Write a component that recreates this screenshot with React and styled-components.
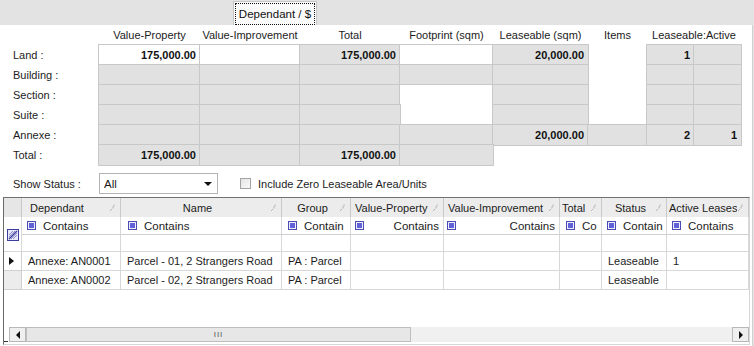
import React from 'react';
import styled, { createGlobalStyle } from 'styled-components';

const GlobalStyle = createGlobalStyle`
  html, body {
    margin: 0;
    padding: 0;
    background: #ffffff;
  }
  body {
    font-family: "Liberation Sans", Arial, sans-serif;
    font-size: 11px;
    color: #1c1c1c;
  }
`;

const Page = styled.div`
  width: 754px;
  height: 346px;
  overflow: hidden;
  background: #e3e3e3;
  display: flex;
  flex-direction: column;
`;

const TabBar = styled.div`
  height: 25px;
  display: flex;
  align-items: flex-end;
  padding-left: 233px;
  box-sizing: border-box;
`;

const Tab = styled.div`
  height: 24px;
  width: 84px;
  box-sizing: border-box;
  border: 1px solid #c6c6c6;
  border-bottom: none;
  background: #fafafa;
  padding: 1px 1px 0 1px;
  display: flex;
`;

const FocusBox = styled.div`
  flex: 1;
  border: 1px dotted #111;
  display: flex;
  align-items: center;
  justify-content: center;
  font-size: 11.5px;
  color: #111;
`;

const Body = styled.div`
  flex: 1;
  width: 753px;
  box-sizing: border-box;
  background: #ffffff;
  border-right: 1px solid #d2d2d2;
  display: flex;
  flex-direction: column;
`;

const Summary = styled.div`
  display: grid;
  grid-template-columns: 99px 101px 100px 100px 93px 95px 59px 47px 47px;
  grid-auto-rows: 20px;
`;

const HeadLabel = styled.div`
  display: flex;
  align-items: center;
  justify-content: center;
  white-space: nowrap;
  color: #1c1c1c;
`;

const RowLabel = styled.div`
  display: flex;
  align-items: center;
  padding-left: 13px;
  color: #1c1c1c;
`;

const SumCell = styled.div`
  display: flex;
  align-items: center;
  justify-content: flex-end;
  padding-right: 4px;
  font-weight: bold;
  color: #111;
  grid-row: ${p => (p.$span ? `span ${p.$span}` : 'auto')};
  background: ${p => (p.$kind === 'g' ? '#e1e1e1' : p.$kind === 'w' ? '#ffffff' : 'transparent')};
  box-shadow: ${p => (p.$kind === 'n' ? 'none' : '0 0 0 1px #c8c8c8')};
`;

const StatusRow = styled.div`
  display: flex;
  align-items: center;
  height: 21px;
  margin-top: 8px;
`;

const StatusLabel = styled.div`
  width: 86px;
  padding-left: 13px;
  color: #1c1c1c;
`;

const Combo = styled.div`
  width: 119px;
  height: 21px;
  box-sizing: border-box;
  border: 1px solid #b4b4b4;
  display: flex;
  align-items: center;
  justify-content: space-between;
  padding: 0 4px 0 4px;
  font-size: 11.5px;
`;

const Arrow = styled.span`
  width: 0;
  height: 0;
  border-left: 4px solid transparent;
  border-right: 4px solid transparent;
  border-top: 4px solid #111;
  margin-right: 1px;
`;

const CheckWrap = styled.label`
  display: flex;
  align-items: center;
  margin-left: 22px;
  gap: 7px;
  color: #1c1c1c;
`;

const CheckBox = styled.span`
  width: 11px;
  height: 11px;
  box-sizing: border-box;
  border: 1px solid #a3a3a3;
  background: linear-gradient(135deg, #e4e4e4, #fafafa);
`;

const GridBox = styled.div`
  margin: 3px 0 0 3px;
  width: 747px;
  height: 148px;
  box-sizing: border-box;
  border-top: 1px solid #707070;
  border-left: 1px solid #6a6a6a;
  border-right: 1px solid #d6d6d6;
  border-bottom: 1px solid #d6d6d6;
  display: flex;
  flex-direction: column;
  overflow: hidden;
`;

const Table = styled.div`
  display: grid;
  grid-template-columns: 18px 99px 161px 69px 93px 116px 42px 65px 82px;
  grid-template-rows: 19px 18px 17px 19px 19px;
`;

const HeadCell = styled.div`
  background: #ececec;
  border-right: 1px solid #c9c9c9;
  display: flex;
  align-items: center;
  padding: 0 4px 0 ${p => p.$pad}px;
  overflow: hidden;
  white-space: nowrap;
  color: #1c1c1c;
`;

const HeadTitle = styled.span`
  flex: 1;
  text-align: ${p => p.$align};
  overflow: hidden;
`;

const Corner = styled.div`
  background: #e6e6e6;
  border-right: 1px solid #c9c9c9;
`;

const FilterHead = styled.div`
  grid-row: span 2;
  border-right: 1px solid #d8d8d8;
  border-bottom: 1px solid #d8d8d8;
  position: relative;
`;

const ClearIcon = styled.svg`
  position: absolute;
  left: 3px;
  top: 12px;
`;

const FilterCell = styled.div`
  border-right: 1px solid #d8d8d8;
  border-bottom: 1px solid #d0d0d0;
  display: flex;
  align-items: center;
  padding-left: ${p => p.$pad}px;
  gap: 7px;
  overflow: hidden;
  white-space: nowrap;
  font-size: 11.5px;
  color: #1c1c1c;
`;

const FilterText = styled.span`
  flex: 1;
  text-align: ${p => (p.$right ? 'right' : 'left')};
  padding-right: ${p => (p.$right ? '4px' : '0')};
`;

const Cell = styled.div`
  border-right: 1px solid #d8d8d8;
  border-bottom: 1px solid #d8d8d8;
  display: flex;
  align-items: center;
  padding-left: 6px;
  overflow: hidden;
  white-space: nowrap;
  color: #1c1c1c;
`;

const RowHead = styled.div`
  border-right: 1px solid #d0d0d0;
  border-bottom: 1px solid #d0d0d0;
  background: ${p => (p.$current ? '#ffffff' : '#ececec')};
  display: flex;
  align-items: center;
  padding-left: 5px;
`;

const Pointer = styled.span`
  width: 0;
  height: 0;
  border-top: 4px solid transparent;
  border-bottom: 4px solid transparent;
  border-left: 5px solid #111;
`;

const Filler = styled.div`
  flex: 1;
`;

const ScrollRow = styled.div`
  height: 15px;
  margin-bottom: 2px;
  display: flex;
`;

const ScrollCorner = styled.div`
  width: 4px;
  border-bottom: 1px solid #333;
`;

const ScrollBtn = styled.div`
  width: 17px;
  box-sizing: border-box;
  margin-left: ${p => (p.$left ? '1px' : '0')};
  border: 1px solid #b8b8b8;
  background: #efefef;
  display: flex;
  align-items: center;
  justify-content: center;
`;

const Track = styled.div`
  flex: 1;
  background: #f0f0f0;
  display: flex;
`;

const Thumb = styled.div`
  width: 385px;
  box-sizing: border-box;
  border: 1px solid #bdbdbd;
  background: #e7e7e7;
  display: flex;
  align-items: center;
  justify-content: center;
  font-size: 8px;
  letter-spacing: 1px;
  color: #555;
`;

const Tri = styled.span`
  width: 0;
  height: 0;
  border-top: 4px solid transparent;
  border-bottom: 4px solid transparent;
  ${p => (p.$dir === 'left' ? 'border-right: 4px solid #111;' : 'border-left: 4px solid #111;')}
`;

const PinIcon = () => (
  <svg width="7" height="9" viewBox="0 0 7 9">
    <path d="M1 8 L3 6" stroke="#b4b4b4" strokeWidth="1" />
    <path d="M3 5 L5 1 L6 2 L4 6 Z" fill="#c4c4c4" />
  </svg>
);

const FilterIcon = () => (
  <svg width="9" height="9" viewBox="0 0 9 9" style={{ flex: 'none' }}>
    <rect x="0.5" y="0.5" width="8" height="8" fill="#eeeeff" stroke="#4c4cb6" />
    <rect x="2" y="2" width="5" height="5" fill="#6262d8" />
  </svg>
);

const headers = ['Value-Property', 'Value-Improvement', 'Total', 'Footprint (sqm)', 'Leaseable (sqm)', 'Items'];

const summaryRows = [
  { label: 'Land :', cells: [{ k: 'w', v: '175,000.00' }, { k: 'w' }, { k: 'g', v: '175,000.00' }, { k: 'w' }, { k: 'g', v: '20,000.00' }, { k: 'n' }, { k: 'g', v: '1' }, { k: 'g' }] },
  { label: 'Building :', cells: [{ k: 'g' }, { k: 'g' }, { k: 'g' }, { k: 'g' }, { k: 'g' }, { k: 'n' }, { k: 'g' }, { k: 'g' }] },
  { label: 'Section :', cells: [{ k: 'g' }, { k: 'g' }, { k: 'g' }, { k: 'w', span: 2 }, { k: 'g' }, { k: 'n' }, { k: 'g' }, { k: 'g' }] },
  // footprint cell of this row is covered by the span above
  { label: 'Suite :', cells: [{ k: 'g' }, { k: 'g' }, { k: 'g' }, { k: 'g' }, { k: 'n' }, { k: 'g' }, { k: 'g' }] },
  { label: 'Annexe :', cells: [{ k: 'g' }, { k: 'g' }, { k: 'g' }, { k: 'g' }, { k: 'g', v: '20,000.00' }, { k: 'g' }, { k: 'g', v: '2' }, { k: 'g', v: '1' }] },
  { label: 'Total :', cells: [{ k: 'g', v: '175,000.00' }, { k: 'g' }, { k: 'g', v: '175,000.00' }, { k: 'g' }] },
];

const columns = [
  { title: 'Dependant', align: 'left', pad: 8, fpad: 5, filter: 'Contains' },
  { title: 'Name', align: 'center', pad: 4, fpad: 7, filter: 'Contains' },
  { title: 'Group', align: 'center', pad: 4, fpad: 6, filter: 'Contain' },
  { title: 'Value-Property', align: 'left', pad: 4, fpad: 4, filter: 'Contains', right: true },
  { title: 'Value-Improvement', align: 'left', pad: 4, fpad: 3, filter: 'Contains', right: true },
  { title: 'Total', align: 'left', pad: 2, fpad: 6, filter: 'Co' },
  { title: 'Status', align: 'center', pad: 4, fpad: 5, filter: 'Contain' },
  { title: 'Active Leases', align: 'left', pad: 2, fpad: 5, filter: 'Contains' },
];

const rows = [
  { current: true, cells: ['Annexe: AN0001', 'Parcel - 01, 2 Strangers Road', 'PA : Parcel', '', '', '', 'Leaseable', '1'] },
  { current: false, cells: ['Annexe: AN0002', 'Parcel - 02, 2 Strangers Road', 'PA : Parcel', '', '', '', 'Leaseable', ''] },
];

const App = () => {
  return (
    <>
      <GlobalStyle />
      <Page>
        <TabBar>
          <Tab>
            <FocusBox>Dependant / $</FocusBox>
          </Tab>
        </TabBar>
        <Body>
          <Summary>
            <div />
            {headers.map(h => (
              <HeadLabel key={h}>{h}</HeadLabel>
            ))}
            <HeadLabel style={{ gridColumn: 'span 2' }}>Leaseable:Active</HeadLabel>
            {summaryRows.map(r => (
              <React.Fragment key={r.label}>
                <RowLabel>{r.label}</RowLabel>
                {r.cells.map((c, i) => (
                  <SumCell key={i} $kind={c.k} $span={c.span}>
                    {c.v}
                  </SumCell>
                ))}
              </React.Fragment>
            ))}
          </Summary>

          <StatusRow>
            <StatusLabel>Show Status :</StatusLabel>
            <Combo>
              <span>All</span>
              <Arrow />
            </Combo>
            <CheckWrap>
              <CheckBox />
              Include Zero Leaseable Area/Units
            </CheckWrap>
          </StatusRow>

          <GridBox>
            <Table>
              <Corner />
              {columns.map(c => (
                <HeadCell key={c.title} $pad={c.pad}>
                  <HeadTitle $align={c.align}>{c.title}</HeadTitle>
                  <PinIcon />
                </HeadCell>
              ))}

              <FilterHead>
                <ClearIcon width="12" height="12" viewBox="0 0 12 12">
                  <rect x="0.5" y="0.5" width="11" height="11" fill="#e8e8f8" stroke="#3d3d9e" />
                  <path d="M2 10 L10 2" stroke="#3d3d9e" strokeWidth="1.2" />
                  <path d="M2 6 L6 2 M2 8 L8 2 M4 10 L10 4 M6 10 L10 6" stroke="#7a7ac6" strokeWidth="0.8" />
                </ClearIcon>
              </FilterHead>
              {columns.map(c => (
                <FilterCell key={c.title} $pad={c.fpad}>
                  <FilterIcon />
                  <FilterText $right={c.right}>{c.filter}</FilterText>
                </FilterCell>
              ))}

              {columns.map(c => (
                <Cell key={c.title} />
              ))}

              {rows.map((r, ri) => (
                <React.Fragment key={ri}>
                  <RowHead $current={r.current}>{r.current && <Pointer />}</RowHead>
                  {r.cells.map((v, i) => (
                    <Cell key={i}>{v}</Cell>
                  ))}
                </React.Fragment>
              ))}
            </Table>
            <Filler />
            <ScrollRow>
              <ScrollCorner />
              <ScrollBtn $left>
                <Tri $dir="left" />
              </ScrollBtn>
              <Track>
                <Thumb>III</Thumb>
              </Track>
              <ScrollBtn>
                <Tri $dir="right" />
              </ScrollBtn>
            </ScrollRow>
          </GridBox>
        </Body>
      </Page>
    </>
  );
};

export default App;
